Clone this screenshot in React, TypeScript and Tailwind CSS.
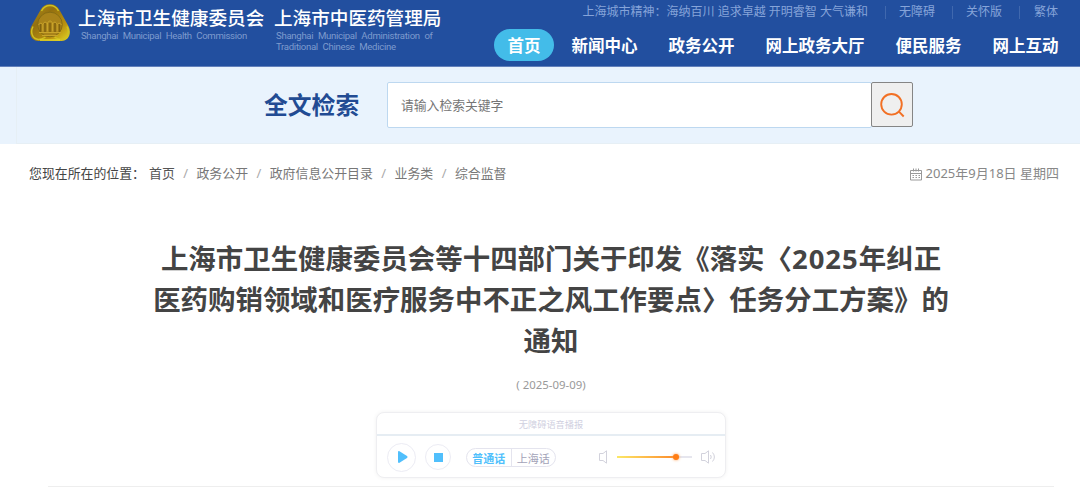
import { useState } from "react";
import clsx from "clsx";

const navItems = ["首页", "新闻中心", "政务公开", "网上政务大厅", "便民服务", "网上互动"];

const crumbs = ["首页", "政务公开", "政府信息公开目录", "业务类", "综合监督"];

function Emblem() {
  return (
    <svg width="42" height="40" viewBox="0 0 42 40" className="shrink-0">
      <defs>
        <linearGradient id="gold" x1="0" y1="0" x2="1" y2="1">
          <stop offset="0" stopColor="#b5961c" />
          <stop offset="0.35" stopColor="#94700f" />
          <stop offset="0.7" stopColor="#b8900f" />
          <stop offset="1" stopColor="#e6d824" />
        </linearGradient>
      </defs>
      <path
        d="M21 1.200c4.500 0 7.500 2 9.500 5.800l9 16.200c3.300 6.300.6 14.800-7.200 14.800H9.500C1.700 38-1 29.500 2.300 23.200L11.500 7C13.500 3.200 16.500 1.200 21 1.200Z"
        fill="url(#gold)"
      />
      <path
        d="M12.500 8C14.400 4.400 17 2.500 21 2.500s6.600 1.900 8.500 5.500M38 23.500c3 5.800.7 12.700-5.500 12.900-3 .1-5.500-1.400-7-2.200M4 23.500c-3 5.800-.7 12.700 5.500 12.900 3 .1 5.500-1.400 7-2.200"
        fill="none"
        stroke="#cfc022"
        strokeWidth="1.500"
      />
      <circle cx="21" cy="21.500" r="12.300" fill="#a9831a" stroke="#806813" strokeWidth="0.800" />
      <path
        d="M11.500 29v-8M16 29v-9M21 29v-9M26 29v-9M30.500 29v-8"
        stroke="#80620f"
        strokeWidth="1.500"
      />
      <path
        d="M9.500 22c1.500-2.500 3.500-2 4.300-.2.800-3.300 3.600-3.300 4.600-.8.600-4 4.600-4 5.200 0 1-2.500 3.800-2.500 4.600.8.800-1.800 2.800-2.300 4.300.2M13.800 22v6.500M18.400 21v7.500M23.600 21v7.500M28.200 22v6.500"
        fill="none"
        stroke="#cba62c"
      />
      <path d="M10 29.500h22M13 32.500h16" fill="none" stroke="#c9a42a" />
      <path d="M11 37h20" stroke="#e0d42a" strokeWidth="1.500" />
    </svg>
  );
}

function Header() {
  return (
    <header className="flex h-[67px] justify-between border-b border-[#6280bb] bg-[#224f9f] pl-[29px]">
      <div className="flex pt-[3px]">
        <Emblem />
        <div className="ml-[7px] w-[196px] whitespace-nowrap text-white">
          <div className="mt-[3px] text-[18.650px] leading-6 font-medium">上海市卫生健康委员会</div>
          <div className="ml-[3px] font-['Roboto'] text-[9.600px] leading-[12px] tracking-[-0.330px] text-[#7e9bce] [word-spacing:2.500px]">
            Shanghai Municipal Health Commission
          </div>
        </div>
        <div className="whitespace-nowrap text-white">
          <div className="mt-[3px] text-[18.600px] leading-6 font-medium">上海市中医药管理局</div>
          <div className="ml-[2px] font-['Roboto'] text-[9.600px] leading-[11px] tracking-[-0.300px] text-[#7e9bce] [word-spacing:2.500px]">
            Shanghai Municipal Administration of
            <br />
            Traditional Chinese Medicine
          </div>
        </div>
      </div>

      <div className="flex flex-col items-end whitespace-nowrap">
        <div className="mr-[22px] flex h-6 items-center text-[12px] text-[#86a4d9]">
          <span>上海城市精神：海纳百川 追求卓越 开明睿智 大气谦和</span>
          <i className="mr-[13px] ml-[17px] h-[13px] w-px bg-[#4068ae]" />
          <a>无障碍</a>
          <i className="mr-[13px] ml-[17px] h-[13px] w-px bg-[#4068ae]" />
          <a>关怀版</a>
          <i className="mr-[14px] ml-[17px] h-[13px] w-px bg-[#4068ae]" />
          <a>繁体</a>
        </div>
        <nav className="mt-[5px] mr-[8px] flex gap-[4px] text-[16.500px] font-bold text-white">
          {navItems.map((item, i) => (
            <a
              key={item}
              className={clsx("flex h-[32px] items-center rounded-full px-[13.500px] pt-[2px]", i === 0 && "bg-[#43bce9]")}
            >
              {item}
            </a>
          ))}
        </nav>
      </div>
    </header>
  );
}

function SearchBar() {
  return (
    <section className="h-[77px] bg-[#e9f3fd] pl-4">
      <div className="flex h-full items-start border-b border-l border-[#e6eff5] pt-[15px] pl-[247px]">
        <h2 className="h-[46px] w-[123px] text-[23.800px] leading-[47px] font-bold text-[#224b93]">全文检索</h2>
        <input
          className="h-[46px] w-[485px] rounded-[2px] border border-[#bdd8f0] bg-white px-[13px] text-[12.800px] outline-none placeholder:text-[#757575]"
          placeholder="请输入检索关键字"
        />
        <button className="-ml-px flex h-[45px] w-[42px] items-center justify-center rounded-[2px] border border-[#858585] bg-[#efefef]">
          <svg width="26" height="26" viewBox="0 0 26 26" fill="none" stroke="#f27024" strokeWidth="1.900">
            <circle cx="12.500" cy="12.300" r="10.300" />
            <path d="m19.700 19.300 5 5.200" />
          </svg>
        </button>
      </div>
    </section>
  );
}

function Breadcrumb() {
  return (
    <div className="flex h-[60px] items-center justify-between pr-[21px] pl-[29px] text-[12.900px] whitespace-nowrap text-[#777]">
      <div className="flex items-center">
        <span className="w-[120px] text-[#444]">您现在所在的位置：</span>
        {crumbs.map((crumb, i) => (
          <span key={crumb}>
            {i > 0 && <span className="inline-block w-[21.700px] text-center text-[#aaa]">/</span>}
            <a className={i === 0 ? "text-[#555]" : undefined}>{crumb}</a>
          </span>
        ))}
      </div>
      <div className="flex items-center gap-1 text-[#888]">
        <svg width="13" height="13" viewBox="0 0 13 13" fill="none" stroke="#999">
          <path d="M1.500 2.500h11v9.500h-11ZM1.500 5.500h11M4.500.5v3M7 .5v3M9.500.5v3" />
          <path d="M3.500 7.500h7.500M3.500 9.500h7.500" strokeDasharray="1.500 1.500" />
        </svg>
        <span className="text-[13px]">2025年9月18日 星期四</span>
      </div>
    </div>
  );
}

function AudioPlayer() {
  const [dialect, setDialect] = useState("普通话");
  const volume = 78;

  return (
    <div className="mx-auto h-[66px] w-[350px] rounded-lg border border-[#eeeef1] bg-white shadow-[0_0_4px_rgba(0,0,0,0.06)]">
      <div className="h-[23px] border-b-2 border-[#e6edf3] text-center text-[9.200px] leading-[23px] text-[#d0d0df]">
        无障碍语音播报
      </div>
      <div className="flex h-[42px] items-center pl-[10px]">
        <button className="flex size-[29px] items-center justify-center rounded-full border border-[#ececf4]">
          <svg width="12" height="14" viewBox="0 0 12 14" className="ml-[2px]" fill="#50bffc">
            <path d="M1 2.200Q1 .5 2.500 1.300L10 6Q11.300 7 10 8L2.500 12.700Q1 13.500 1 11.800Z" />
          </svg>
        </button>
        <button className="ml-[9px] flex size-[26px] items-center justify-center rounded-full border border-[#ececf4]">
          <span className="size-[9px] bg-[#50bffc]" />
        </button>
        <div className="ml-[15px] flex h-[19px] w-[90px] items-center rounded-full border border-[#e4e4ee] text-[11px] leading-[19px]">
          {["普通话", "上海话"].map((name, i) => (
            <button
              key={name}
              onClick={() => setDialect(name)}
              className={clsx(
                "h-full flex-1 whitespace-nowrap",
                i > 0 && "border-l border-[#e4e4ee]",
                dialect === name ? "font-bold text-[#50bffc]" : "text-[#a3a3b8]"
              )}
            >
              {name}
            </button>
          ))}
        </div>
        <svg width="10" height="14" viewBox="0 0 10 14" className="ml-[42px]" fill="none" stroke="#d2d2dc">
          <path d="M8.500.8v12.400L5 10.500H1.500v-7H5Z" />
        </svg>
        <div className="relative ml-[9px] h-[2px] w-[75px] bg-[#e6e6ee]">
          <div className="h-full bg-gradient-to-r from-[#fbe867] to-[#fa8a2a]" style={{ width: `${volume}%` }} />
          <span
            className="absolute -top-[2px] -ml-[3px] size-[6px] rounded-full bg-[#ff7d14] shadow-[0_0_3px_#ff9a4a]"
            style={{ left: `${volume}%` }}
          />
        </div>
        <svg width="16" height="14" viewBox="0 0 16 14" className="ml-2" fill="none" stroke="#d2d2dc">
          <path d="M8.500.8v12.400L5 10.500H1.500v-7H5Z" />
          <path d="M10.500 5q1.500 2 0 4M12.500 2.500q3.800 4.500 0 9" />
        </svg>
      </div>
    </div>
  );
}

export default function App() {
  return (
    <div className="h-[489px] w-[1080px] overflow-hidden bg-white font-['Noto_Sans','Noto_Sans_CJK_SC',sans-serif]">
      <Header />
      <SearchBar />
      <Breadcrumb />
      <article className="ml-12 w-[1006px] border-b border-[#eee] pt-[34px] pb-[8px]">
        <h1 className="text-center text-[27.450px] leading-[41px] font-bold whitespace-nowrap text-[#444]">
          上海市卫生健康委员会等十四部门关于印发《落实〈<span className="tracking-[1px]">2025</span>年纠正
          <br />
          医药购销领域和医疗服务中不正之风工作要点〉任务分工方案》的
          <br />
          通知
        </h1>
        <p className="mt-4 mb-[19px] text-center text-[11.400px] leading-4 text-[#999]">( 2025-09-09)</p>
        <AudioPlayer />
      </article>
    </div>
  );
}
